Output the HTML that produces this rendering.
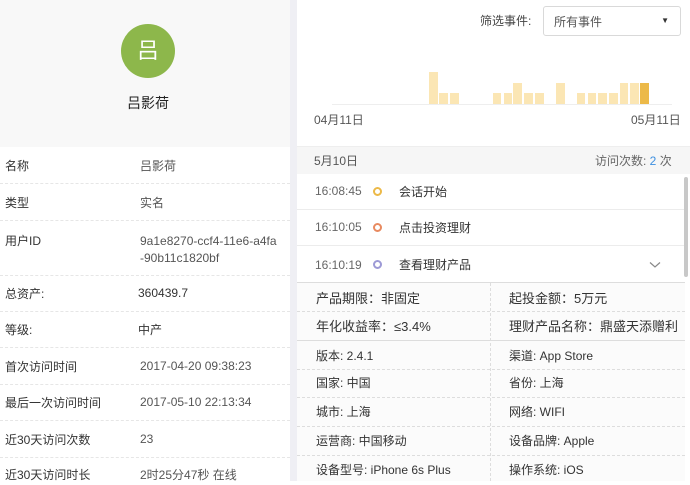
<!DOCTYPE html>
<html><head><meta charset="utf-8"><style>
*{margin:0;padding:0;box-sizing:border-box}
body{width:690px;height:481px;overflow:hidden;background:#fff;font-family:"Liberation Sans","Noto Sans CJK SC",sans-serif;font-size:12px;color:#333;position:relative}
.a{position:absolute}
.lrow{position:absolute;left:0;width:290px;border-bottom:1px dashed #e6e6e6}
.lab{position:absolute;left:5px}
.val{position:absolute;left:140px;color:#555}
.bar{position:absolute;width:8.5px;background:#fbe6b4;bottom:377px}
.ev{position:absolute;left:297px;width:388px;border-bottom:1px solid #ececec;height:36px}
.ev .t{position:absolute;left:18px;top:10px;color:#666}
.ev .c{position:absolute;left:76px;top:13px;width:9px;height:9px;border-radius:50%;border:2px solid}
.ev .n{position:absolute;left:102px;top:9px;color:#333}
.dr{position:absolute;left:297px;width:388px;border-bottom:1px dashed #ddd;font-size:12px}
.dr span{position:absolute;top:5px}
</style></head><body>
<div class="a" style="left:0;top:0;width:290px;height:147px;background:#f8f8f8"></div>
<div class="a" style="left:121px;top:24px;width:54px;height:54px;border-radius:50%;background:#8db74b;color:#fff;font-size:22px;text-align:center;line-height:54px">吕</div>
<div class="a" style="left:0;width:296px;top:93px;text-align:center;font-size:14px;color:#222">吕影荷</div>
<div class="a" style="left:290px;top:0;width:7px;height:481px;background:#efeff4"></div>

<div class="lrow" style="top:147px;height:37px"><span class="lab" style="top:10px">名称</span><span class="val" style="top:10px">吕影荷</span></div>
<div class="lrow" style="top:184px;height:37px"><span class="lab" style="top:10px">类型</span><span class="val" style="top:10px">实名</span></div>
<div class="lrow" style="top:221px;height:55px"><span class="lab" style="top:11px">用户ID</span><span class="val" style="top:12px;line-height:17px">9a1e8270-ccf4-11e6-a4fa<br>-90b11c1820bf</span></div>
<div class="lrow" style="top:276px;height:36px"><span class="lab" style="top:9px">总资产:</span><span class="val" style="top:10px;left:138px;color:#333">360439.7</span></div>
<div class="lrow" style="top:312px;height:36px"><span class="lab" style="top:9px">等级:</span><span class="val" style="top:9px;left:138px;color:#333">中产</span></div>
<div class="lrow" style="top:348px;height:37px"><span class="lab" style="top:10px">首次访问时间</span><span class="val" style="top:11px">2017-04-20 09:38:23</span></div>
<div class="lrow" style="top:385px;height:36px"><span class="lab" style="top:9px">最后一次访问时间</span><span class="val" style="top:10px">2017-05-10 22:13:34</span></div>
<div class="lrow" style="top:421px;height:37px"><span class="lab" style="top:10px">近30天访问次数</span><span class="val" style="top:11px">23</span></div>
<div class="a" style="left:5px;top:466px">近30天访问时长</div><div class="a" style="left:140px;top:466px;color:#555">2时25分47秒 在线</div>

<div class="a" style="left:480px;top:12px;color:#444">筛选事件:</div>
<div class="a" style="left:543px;top:6px;width:138px;height:30px;border:1px solid #d9d9d9;border-radius:3px"><span class="a" style="left:10px;top:6px;color:#555">所有事件</span><span class="a" style="right:11px;top:9px;font-size:8px">▼</span></div>
<div class="a" style="left:332px;top:104px;width:340px;height:1px;background:#eee"></div>
<div class="bar" style="left:429.3px;height:32px;"></div>
<div class="bar" style="left:439.3px;height:11px"></div>
<div class="bar" style="left:450.3px;height:11px"></div>
<div class="bar" style="left:492.7px;height:11px"></div>
<div class="bar" style="left:503.7px;height:11px"></div>
<div class="bar" style="left:513.3px;height:21px"></div>
<div class="bar" style="left:524.3px;height:11px"></div>
<div class="bar" style="left:535px;height:11px"></div>
<div class="bar" style="left:556px;height:21px"></div>
<div class="bar" style="left:576.7px;height:11px"></div>
<div class="bar" style="left:587.7px;height:11px"></div>
<div class="bar" style="left:598.3px;height:11px"></div>
<div class="bar" style="left:609px;height:11px"></div>
<div class="bar" style="left:619.7px;height:21px"></div>
<div class="bar" style="left:630.3px;height:21px"></div>
<div class="bar" style="left:640px;height:21px;background:#ecb948"></div>
<div class="a" style="left:314px;top:111px;color:#555">04月11日</div>
<div class="a" style="left:631px;top:111px;color:#555">05月11日</div>

<div class="a" style="left:297px;top:146px;width:393px;height:28px;background:#f6f6f6;border-top:1px solid #eee"></div>
<div class="a" style="left:314px;top:152px;color:#555">5月10日</div>
<div class="a" style="left:595px;top:152px;color:#666">访问次数: <span style="color:#3d8fe0">2</span> 次</div>

<div class="ev" style="top:174px"><span class="t">16:08:45</span><span class="c" style="border-color:#ecb948"></span><span class="n">会话开始</span></div>
<div class="ev" style="top:210px"><span class="t">16:10:05</span><span class="c" style="border-color:#e88a60"></span><span class="n">点击投资理财</span></div>
<div class="ev" style="top:246px;height:37px;border-bottom:1px solid #ddd"><span class="t" style="top:12px">16:10:19</span><span class="c" style="border-color:#9d9ad6;top:14px"></span><span class="n" style="top:10px">查看理财产品</span><svg class="a" style="left:352px;top:15px" width="12" height="8"><path d="M1 1.5L6 6L11 1.5" fill="none" stroke="#888" stroke-width="1.2"/></svg></div>
<div class="a" style="left:684px;top:177px;width:4px;height:100px;background:#c8c8c8;border-radius:2px"></div>

<div class="a" style="left:297px;top:283px;width:388px;height:198px;background:#fbfbfb"></div>
<div class="a" style="left:490px;top:283px;width:0;height:198px;border-left:1px dashed #ddd"></div>
<div class="dr" style="top:284px;height:28px;font-size:13px"><span style="left:19px;top:4px">产品期限：非固定</span><span style="left:212px;top:4px">起投金额：5万元</span></div>
<div class="dr" style="top:312px;height:29px;font-size:13px;border-bottom:1px solid #ddd"><span style="left:19px;top:4px">年化收益率：≤3.4%</span><span style="left:212px;top:4px;white-space:nowrap">理财产品名称：鼎盛天添赠利</span></div>
<div class="dr" style="top:341px;height:29px"><span style="left:19px;top:6px">版本: 2.4.1</span><span style="left:212px;top:6px">渠道: App Store</span></div>
<div class="dr" style="top:370px;height:28px"><span style="left:19px;top:4px">国家: 中国</span><span style="left:212px;top:4px">省份: 上海</span></div>
<div class="dr" style="top:398px;height:29px"><span style="left:19px;top:5px">城市: 上海</span><span style="left:212px;top:5px">网络: WIFI</span></div>
<div class="dr" style="top:427px;height:29px"><span style="left:19px;top:5px">运营商: 中国移动</span><span style="left:212px;top:5px">设备品牌: Apple</span></div>
<div class="dr" style="top:456px;height:29px;border:none"><span style="left:19px;top:5px">设备型号: iPhone 6s Plus</span><span style="left:212px;top:5px">操作系统: iOS</span></div>
</body></html>
